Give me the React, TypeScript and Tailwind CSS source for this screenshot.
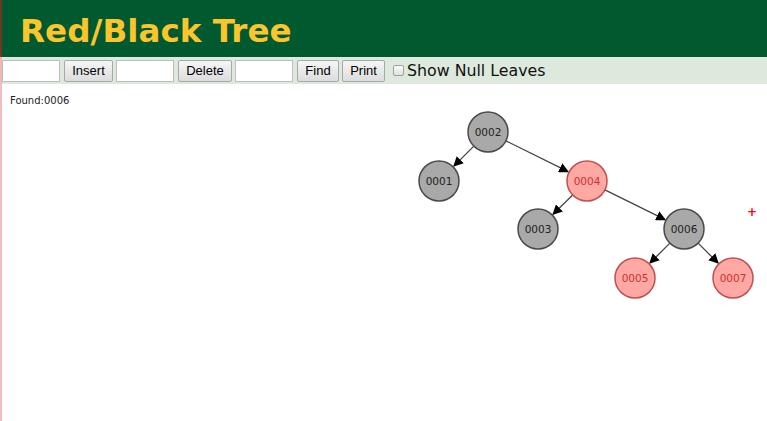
import React from "react";

type N = { x: number; y: number; label: string; red: boolean };

const nodes: N[] = [
  { x: 488, y: 132, label: "0002", red: false },
  { x: 439, y: 181, label: "0001", red: false },
  { x: 587, y: 181, label: "0004", red: true },
  { x: 538, y: 229, label: "0003", red: false },
  { x: 684, y: 229, label: "0006", red: false },
  { x: 635, y: 278, label: "0005", red: true },
  { x: 733, y: 278, label: "0007", red: true },
];

const edges: [number, number][] = [
  [0, 1],
  [0, 2],
  [2, 3],
  [2, 4],
  [4, 5],
  [4, 6],
];

const R = 20;

function Tree() {
  return (
    <svg width="765" height="337" viewBox="2 84 765 337" className="block">
      <defs>
        <marker id="arr" markerWidth="10" markerHeight="10" refX="9" refY="5" orient="auto" markerUnits="userSpaceOnUse">
          <path d="M0,0 L10,5 L0,10 z" fill="#000" />
        </marker>
      </defs>
      {edges.map(([a, b], i) => {
        const p = nodes[a];
        const c = nodes[b];
        const dx = c.x - p.x;
        const dy = c.y - p.y;
        const d = Math.sqrt(dx * dx + dy * dy);
        const ux = dx / d;
        const uy = dy / d;
        return (
          <line
            key={i}
            x1={p.x + ux * R}
            y1={p.y + uy * R}
            x2={c.x - ux * (R + 1)}
            y2={c.y - uy * (R + 1)}
            stroke="#444"
            strokeWidth="1.3"
            markerEnd="url(#arr)"
          />
        );
      })}
      {nodes.map((n, i) => (
        <g key={i}>
          <circle
            cx={n.x}
            cy={n.y}
            r={R}
            fill={n.red ? "#ffa8a4" : "#a9a9a9"}
            stroke={n.red ? "#c0504d" : "#4a4a4a"}
            strokeWidth="1.5"
          />
          <text
            x={n.x}
            y={n.y + 4}
            textAnchor="middle"
            fontSize="10.5"
            fontFamily="'DejaVu Sans', Verdana, sans-serif"
            fill={n.red ? "#d03030" : "#222"}
          >
            {n.label}
          </text>
        </g>
      ))}
      <text x="752" y="216" textAnchor="middle" fontSize="12" fontWeight="bold" fill="#ff0000" fontFamily="'DejaVu Sans', sans-serif">
        +
      </text>
    </svg>
  );
}

export default function App() {
  const btn =
    "h-[22px] px-[6px] border border-[#a9a9a9] rounded-[2px] bg-gradient-to-b from-[#f6f6f6] to-[#dcdcdc] text-[13px] text-black leading-none";
  const inp = "h-[22px] bg-white border border-[#bdbdbd]";
  return (
    <div className="w-[767px] h-[421px] overflow-hidden bg-white flex flex-col" style={{ fontFamily: "'Liberation Sans', Arial, sans-serif" }}>
      <div className="h-[57px] bg-[#00592f] border-l-2 border-[#6a3b22] flex items-center pl-[18px] shrink-0">
        <h1
          className="text-[#fbc52b] text-[32.6px] font-bold leading-none pt-[5px]"
          style={{ fontFamily: "'DejaVu Sans', Verdana, sans-serif" }}
        >
          Red/Black Tree
        </h1>
      </div>
      <div className="h-[27px] bg-[#dee9dd] border-l-2 border-[#f0b7b4] flex items-center shrink-0">
        <input className={`${inp} w-[58px] ml-0`} />
        <button className={`${btn} ml-[4px] w-[49px]`}>Insert</button>
        <input className={`${inp} w-[58px] ml-[3px]`} />
        <button className={`${btn} ml-[4px] w-[54px]`}>Delete</button>
        <input className={`${inp} w-[58px] ml-[3px]`} />
        <button className={`${btn} ml-[4px] w-[42px]`}>Find</button>
        <button className={`${btn} ml-[3px] w-[43px]`}>Print</button>
        <span className="ml-[8px] w-[11px] h-[11px] border border-[#a0a0a0] rounded-[2px] bg-gradient-to-b from-[#fbfbfb] to-[#e0e0e0]" />
        <span className="ml-[3px] text-[15.8px] text-[#111] leading-none" style={{ fontFamily: "'DejaVu Sans', Verdana, sans-serif" }}>
          Show Null Leaves
        </span>
      </div>
      <div className="flex-1 relative border-l-2 border-[#f4bcbc]">
        <div className="absolute left-[8px] top-[9px] text-[10px] text-[#222]" style={{ fontFamily: "'DejaVu Sans', Verdana, sans-serif" }}>
          Found:0006
        </div>
        <Tree />
      </div>
    </div>
  );
}
